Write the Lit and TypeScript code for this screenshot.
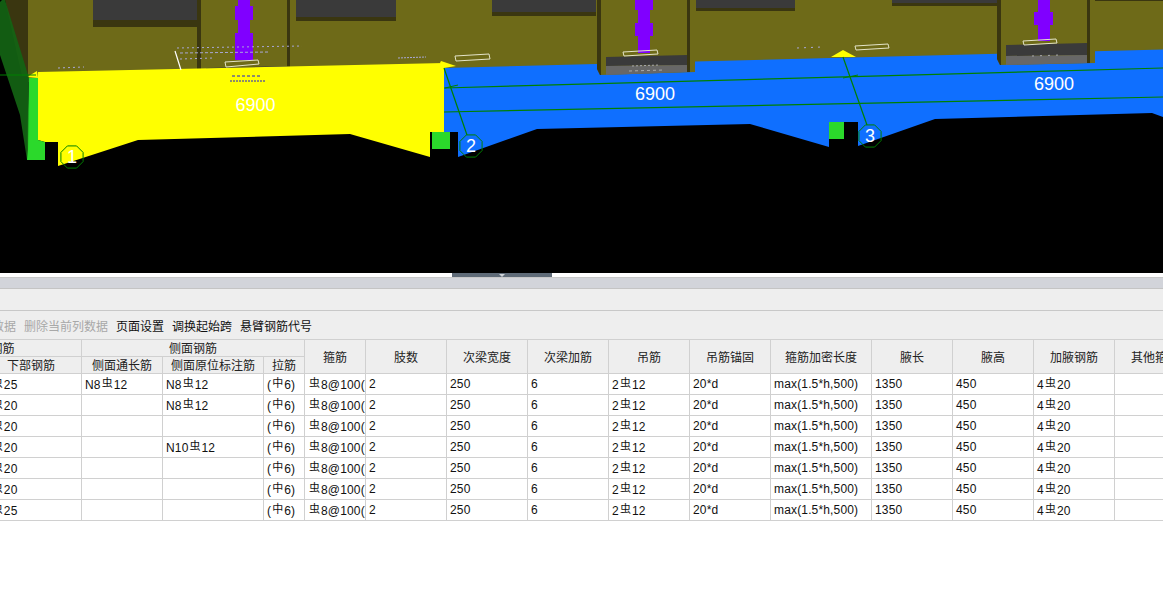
import { html, css, svg, LitElement } from "lit";
import { customElement } from "lit/decorators.js";

const OLIVE = "#6e6a18";
const SHADOW = "#3a3610";
const SLATE = "#3a3a3a";
const STONE = "#676767";
const PURPLE = "#8000ff";
const GREEN = "#2bd92b";
const AXIS = "#008000";
const SMUDGE = "#a9a8d6";

// upper-storey columns: x of left edge, bottom-left and bottom-right y
const columns = [
  { x: 197, y1: 80, y2: 78, top: 67, mid: 72, stub: [[238, 0, 12, 6], [235, 6, 18, 14], [238, 20, 12, 13], [235, 33, 18, 27]] },
  { x: 597, y1: 75, y2: 72, top: 56, mid: 66, stub: [[635, 0, 18, 10], [638, 10, 12, 13], [635, 23, 18, 13], [638, 36, 12, 17]] },
  { x: 997, y1: 65, y2: 63, top: 44, mid: 56, stub: [[1038, 0, 12, 12], [1034, 12, 19, 13], [1038, 25, 12, 16]] },
];

const windows = [
  [93, 197, 20, 27],
  [296, 396, 17, 21],
  [492, 596, 12, 16],
  [696, 795, 8, 11],
  [892, 997, 3, 6],
  [1095, 1163, 0, 1],
];

const brackets = [
  "225,62 258,60 259,64 226,67",
  "455,56 489,54 490,59 456,61",
  "623,52 657,50 658,54 624,56",
  "855,46 888,44 889,48 856,50",
  "1023,41 1056,39 1057,43 1024,45",
];

const smudges = [
  [177, 48, 302, 46, SMUDGE, "2 3"],
  [180, 53, 270, 52, SMUDGE, "3 2"],
  [180, 59, 214, 58, SMUDGE, "2 3"],
  [58, 68, 84, 67, SMUDGE, "2 3"],
  [398, 58, 426, 57, SMUDGE, "2 1"],
  [797, 48, 822, 47, SMUDGE, "2 5"],
  [232, 76, 260, 76, "#1a1ad8", "3 2"],
  [230, 81, 265, 81, "#1a1ad8", "2 1"],
  [632, 66, 660, 65, "#aaa", "2 2"],
  [629, 71, 664, 70, "#aaa", "3 3"],
  [1032, 56, 1060, 55, "#aaa", "2 6"],
];

const axes = [
  { cx: 72, cy: 157, label: "1" },
  { cx: 471, cy: 146, label: "2" },
  { cx: 870, cy: 136, label: "3" },
];

function ring(cx: number, cy: number) {
  const pts: string[] = [];
  for (let i = 0; i < 8; i++) {
    const a = (Math.PI / 4) * i + Math.PI / 8;
    pts.push(`${cx + 12 * Math.cos(a)},${cy + 12 * Math.sin(a)}`);
  }
  return pts.join(" ");
}

@customElement("model-view")
export class ModelView extends LitElement {
  static styles = css`
    :host {
      display: block;
      height: 273px;
      background: #000;
    }
    svg {
      display: block;
    }
    .dim,
    .num {
      font: 18px "Liberation Sans", sans-serif;
      fill: #fff;
      text-anchor: middle;
    }
  `;

  render() {
    return html`
      <svg width="1163" height="273" viewBox="0 0 1163 273">
        <polygon fill=${OLIVE} points="28,0 1163,0 1163,60 444,75 28,82" />
        <polygon fill=${SHADOW} points="5,0 28,0 28,76 22,76" />

        ${windows.map(
          ([x1, x2, y, s]) => svg`
            <rect x=${x1} y="0" width=${x2 - x1} height=${s} fill=${SHADOW} />
            <rect x=${x1} y="0" width=${x2 - x1} height=${y} fill=${SLATE} />
          `
        )}

        <!-- blue beam -->
        <polygon
          fill="#0f6fff"
          points="444,68 1163,49.5 1163,117 1152,113 935,119 858,146 858,122 829,122 829,147 750,124 537,129 458,157 458,132 444,132"
        />

        ${columns.map(
          (c) => svg`
            <polygon fill=${OLIVE} points="${c.x},0 ${c.x + 98},0 ${c.x + 98},${c.y2} ${c.x + 3},${c.y1} ${c.x},${c.y1 - 6}" />
            <polygon fill=${SHADOW} points="${c.x},0 ${c.x + 4},0 ${c.x + 4},${c.y1} ${c.x + 3},${c.y1} ${c.x},${c.y1 - 6}" />
            <rect x=${c.x + 90} y="0" width="3" height=${c.y2} fill=${SHADOW} />
            <polygon fill=${SLATE} points="${c.x + 9},${c.top + 1} ${c.x + 90},${c.top - 1} ${c.x + 90},${c.mid - 1} ${c.x + 9},${c.mid}" />
            <polygon fill=${STONE} points="${c.x + 9},${c.mid} ${c.x + 90},${c.mid - 1} ${c.x + 90},${c.y2} ${c.x + 9},${c.y1}" />
            ${c.stub.map(
              ([x, y, w, h]) => svg`<rect x=${x} y=${y} width=${w} height=${h} fill=${PURPLE} />`
            )}
          `
        )}

        <!-- yellow beam -->
        <polygon
          fill="#ffff00"
          points="38,72 444,63 444,132 430,132 430,157 350,134 138,140 58,166 58,142 45,142 38,140"
        />
        <polygon fill="#ffff00" points="27,77 37,71 38,78" />
        <polygon fill="#ffff00" points="440,63 441,61 456,66 444,68" />
        <polygon fill="#ffff00" points="831,57 843,50 856,57" />

        <!-- supports -->
        <polygon fill=${GREEN} points="29,78 38,78 38,140 45,142 45,160 27,160 27,140" />
        <rect x="432" y="132" width="18" height="17" fill=${GREEN} />
        <rect x="829" y="122" width="15" height="17" fill=${GREEN} />
        <polygon fill="#136413" fill-opacity="0.92" points="0,2 2,0 5,0 29,78 28,150 27,160 20,115 0,55" />

        <line x1="0" y1="75" x2="36" y2="75" stroke=${AXIS} />
        <line x1="175" y1="51" x2="181" y2="70" stroke="#fff" stroke-width="1.2" />

        ${smudges.map(
          ([x1, y1, x2, y2, color, dash]) => svg`
            <line x1=${x1} y1=${y1} x2=${x2} y2=${y2} stroke=${color} stroke-dasharray=${dash} />
          `
        )}

        ${brackets.map(
          (p) => svg`<polygon points=${p} fill="none" stroke="#e4e4c8" stroke-width="1" />`
        )}

        <!-- axis lines -->
        <line x1="444" y1="88" x2="1163" y2="68" stroke=${AXIS} stroke-width="1.2" />
        <line x1="444" y1="112" x2="1163" y2="97" stroke=${AXIS} stroke-width="1.2" />
        <line x1="444" y1="68" x2="467" y2="135" stroke=${AXIS} stroke-width="1.2" />
        <line x1="843" y1="57" x2="867" y2="125" stroke=${AXIS} stroke-width="1.2" />
        <line x1="445" y1="88" x2="458" y2="85" stroke=${AXIS} />
        <line x1="843" y1="78" x2="858" y2="75" stroke=${AXIS} />

        <text class="dim" x="255.5" y="111">6900</text>
        <text class="dim" x="655" y="100">6900</text>
        <text class="dim" x="1054" y="90">6900</text>

        ${axes.map(
          (a) => svg`
            <polygon points=${ring(a.cx, a.cy)} fill="none" stroke=${AXIS} />
            <text class="num" x=${a.cx} y=${a.cy + 6}>${a.label}</text>
          `
        )}
      </svg>
    `;
  }
}

const colWidths = [81, 101, 81, 101, 41, 61, 81, 81, 81, 81, 81, 101, 81, 81, 81, 81];

const side = ["N8@12", "", "", "", "", "", ""];
const mark = ["N8@12", "N8@12", "", "N10@12", "", "", ""];
const lower = ["6@25", "6@20", "6@20", "6@20", "6@20", "6@20", "6@25"];

// @ in a rebar spec stands for the grade mark
function spec(text: string) {
  const parts = text.split("@");
  if (parts.length < 2) return text;
  return html`${parts[0]}<span class="mark">虫</span>${parts[1]}`;
}

const rows = lower.map((low, i) => [
  "",
  low,
  side[i],
  mark[i],
  html`(<span class="mark">中</span>6)`,
  html`<span class="mark">虫</span>8&#64;100(`,
  "2",
  "250",
  "6",
  "2@12",
  "20*d",
  "max(1.5*h,500)",
  "1350",
  "450",
  "4@20",
  "",
]);

@customElement("app-root")
export class AppRoot extends LitElement {
  static styles = css`
    :host {
      display: block;
      width: 1163px;
      height: 598px;
      overflow: hidden;
      background: #fff;
      font: 12px "Liberation Sans", "Noto Sans CJK SC", sans-serif;
      color: #111;
    }
    .splitter {
      height: 4px;
      display: flex;
      justify-content: center;
      padding-right: 159px;
      border-bottom: 1px solid #c8c8c8;
    }
    .handle {
      width: 100px;
      background: #5f6b78;
      display: flex;
      justify-content: center;
    }
    .handle i {
      border: 3px solid transparent;
      border-top-color: #cfd3d8;
      border-bottom: 0;
      margin-top: 1px;
    }
    .tabs {
      height: 10px;
      background: #d2d4da;
      border-bottom: 1px solid #c4c4c4;
    }
    .ribbon {
      height: 21px;
      background: #eee;
      border-bottom: 1px solid #c8c8c8;
    }
    .actions {
      height: 28px;
      background: #eee;
      display: flex;
      align-items: center;
      gap: 8px;
      margin-left: -68px;
      font-family: "Noto Sans CJK SC", sans-serif;
      white-space: nowrap;
    }
    .actions .off {
      color: #a8a8a8;
    }
    .grid {
      width: 1163px;
      overflow: hidden;
    }
    table {
      border-collapse: collapse;
      table-layout: fixed;
      width: 1296px;
      margin-left: -101px;
    }
    th,
    td {
      border: 1px solid #d0d0d0;
      padding: 0;
      overflow: hidden;
      white-space: nowrap;
    }
    th {
      background: #eee;
      font-family: "Noto Sans CJK SC", sans-serif;
      font-weight: 400;
      height: 16px;
      line-height: 14px;
      color: #222;
    }
    td {
      height: 21px;
      padding-left: 3px;
      box-sizing: border-box;
      letter-spacing: 0.15px;
    }
    .mark {
      font: 11px "Noto Sans CJK SC", sans-serif;
      position: relative;
      top: -2px;
      margin: 0 1px;
      letter-spacing: 0;
    }
  `;

  render() {
    return html`
      <model-view></model-view>
      <div class="splitter"><div class="handle"><i></i></div></div>
      <div class="tabs"></div>
      <div class="ribbon"></div>
      <div class="actions">
        <span class="off">删除当前行数据</span>
        <span class="off">删除当前列数据</span>
        <span>页面设置</span>
        <span>调换起始跨</span>
        <span>悬臂钢筋代号</span>
      </div>
      <div class="grid">
        <table>
          <colgroup>
            ${colWidths.map((w) => html`<col style="width:${w}px" />`)}
          </colgroup>
          <thead>
            <tr>
              <th colspan="2">下部钢筋</th>
              <th colspan="3">侧面钢筋</th>
              ${["箍筋", "肢数", "次梁宽度", "次梁加筋", "吊筋", "吊筋锚固", "箍筋加密长度", "腋长", "腋高", "加腋钢筋", "其他箍筋"].map(
                (t) => html`<th rowspan="2">${t}</th>`
              )}
            </tr>
            <tr>
              <th>下通长筋</th>
              <th>下部钢筋</th>
              <th>侧面通长筋</th>
              <th>侧面原位标注筋</th>
              <th>拉筋</th>
            </tr>
          </thead>
          <tbody>
            ${rows.map(
              (row) => html`<tr>
                ${row.map((c) => html`<td>${typeof c === "string" ? spec(c) : c}</td>`)}
              </tr>`
            )}
          </tbody>
        </table>
      </div>
    `;
  }
}
